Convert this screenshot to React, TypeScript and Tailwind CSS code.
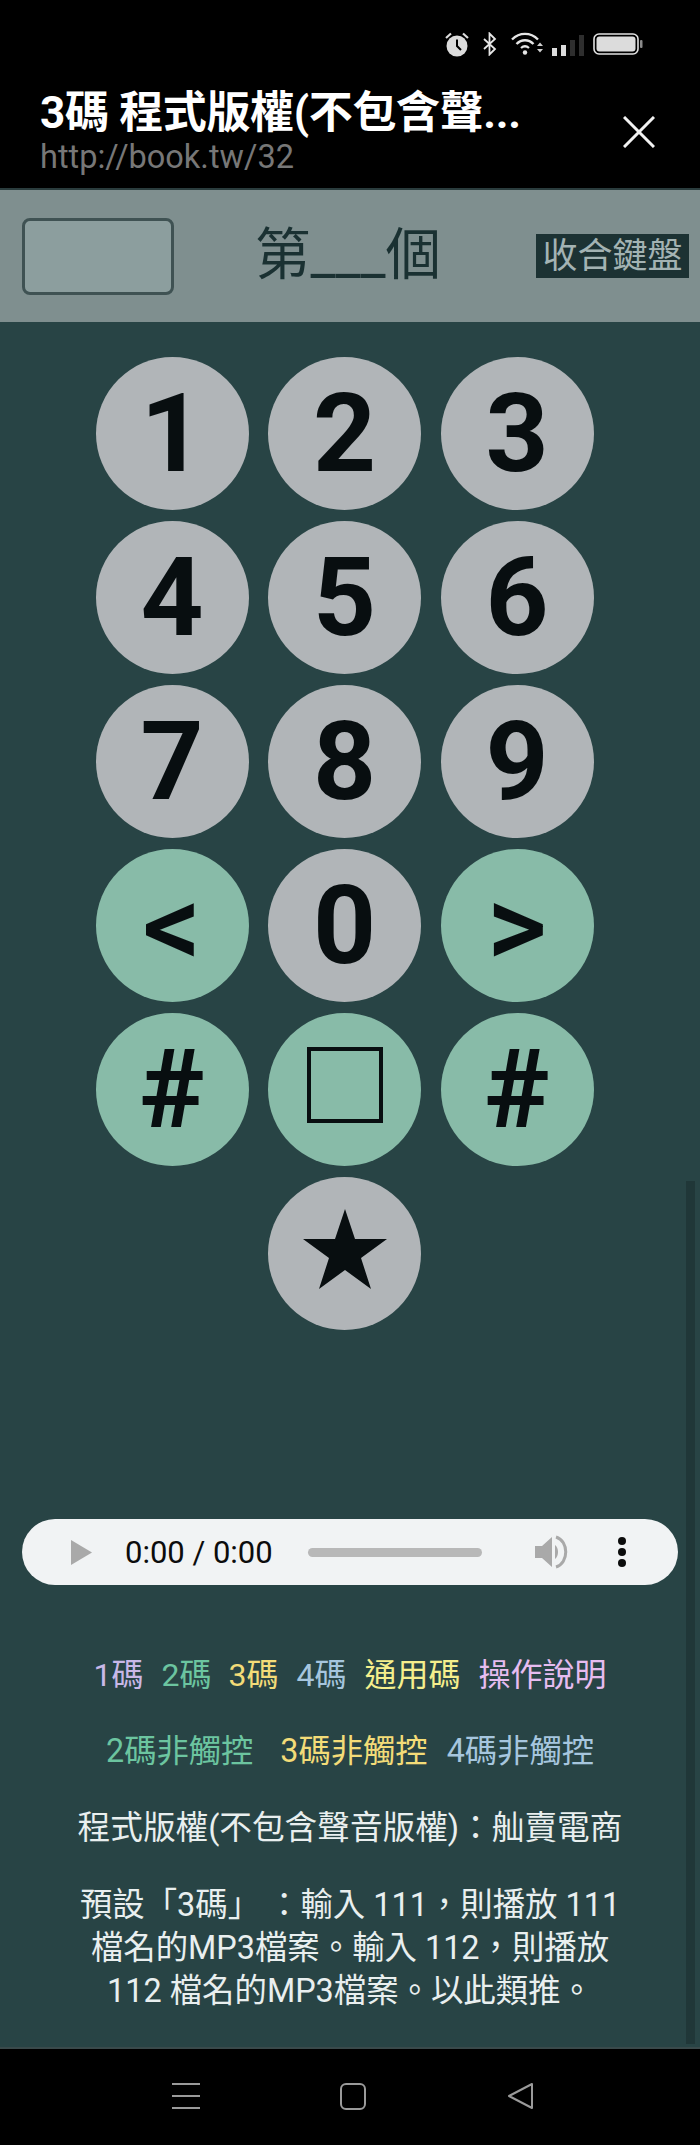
const FONT = "font-['Roboto','Noto_Sans_CJK_TC',sans-serif]";

function StatusIcons() {
  return (
    <div className="flex items-start justify-end pr-[57px] pt-[32px] h-[80px]">
      <svg width="24" height="25" viewBox="0 0 24 25" className="mr-[13px]" fill="none">
        <path d="M1 6 L6 1.5 M23 6 L18 1.5" stroke="#dcdcdc" strokeWidth="2.2" />
        <circle cx="12" cy="14" r="10.5" fill="#dcdcdc" />
        <path d="M12 7.5 V14 L16 18" stroke="#000" strokeWidth="2" fill="none" />
      </svg>
      <svg width="16" height="24" viewBox="0 0 16 24" className="mr-[13px]" fill="none">
        <path d="M2 7 L13 17 L7.5 22.5 V1.5 L13 7 L2 17" stroke="#e6e6e6" strokeWidth="1.8" />
      </svg>
      <svg width="33" height="24" viewBox="0 0 33 24" className="mr-[8px] mt-[-1px]" fill="none">
        <path d="M1 8.5 C8.5 1 19.5 1 27 8.5" stroke="#e6e6e6" strokeWidth="2.4" />
        <path d="M5.5 13 C10.5 8 17.5 8 22.5 13" stroke="#e6e6e6" strokeWidth="2.4" />
        <path d="M10 17 C12.5 14.8 15.5 14.8 18 17" stroke="#e6e6e6" strokeWidth="2.2" />
        <circle cx="14" cy="21.5" r="2.2" fill="#e6e6e6" />
        <path d="M26 15 L29 11.5 L32 15 Z M26 18 L29 21.5 L32 18 Z" fill="#cfcfcf" />
      </svg>
      <div className="flex items-end gap-[4px] h-[24px] mr-[9px]">
        <div className="w-[5px] h-[8px] bg-[#dcdcdc]" />
        <div className="w-[5px] h-[11px] bg-[#dcdcdc]" />
        <div className="w-[5px] h-[16px] bg-[#2e2e2e]" />
        <div className="w-[5px] h-[21px] bg-[#2e2e2e]" />
      </div>
      <svg width="50" height="22" viewBox="0 0 50 22" fill="none" className="mt-[1px]">
        <rect x="1" y="1" width="44" height="20" rx="5" stroke="#e2e2e2" strokeWidth="1.6" />
        <rect x="3.5" y="3.5" width="39" height="15" rx="3" fill="#dcdcdc" />
        <rect x="47" y="7" width="2.5" height="8" rx="1" fill="#8a8a8a" />
      </svg>
    </div>
  );
}

function Key({ label, green, className = "" }: { label: React.ReactNode; green?: boolean; className?: string }) {
  return (
    <button className={`w-[153px] h-[153px] rounded-full flex items-center justify-center text-[110px] leading-none font-bold text-[#080e10] ${green ? "bg-[#88bba8]" : "bg-[#b1b5b8]"} ${className}`}>
      {label}
    </button>
  );
}

export default function App() {
  return (
    <div className={`${FONT} relative w-[700px] h-[2145px] bg-black overflow-hidden flex flex-col [text-spacing-trim:space-all]`}>
      {/* status + title */}
      <header className="h-[190px] bg-black shrink-0 border-b-[2px] border-[#2a3c3d]">
        <StatusIcons />
        <div className="flex items-start justify-between pl-[40px] pr-[45px]">
          <div>
            <div className="text-[44px] leading-[54px] font-bold text-white whitespace-nowrap mt-[6px] tracking-[-0.35px]">3碼 程式版權(不包含聲...</div>
            <div className="text-[32.5px] leading-[32px] text-[#777777] font-['Roboto',sans-serif] mt-[1px]">http://book.tw/32</div>
          </div>
          <svg width="32" height="32" viewBox="0 0 32 32" className="mt-[36px]" fill="none">
            <path d="M1 1 L31 31 M31 1 L1 31" stroke="#f2f2f2" strokeWidth="3" />
          </svg>
        </div>
      </header>

      {/* input bar */}
      <div className="h-[132px] shrink-0 bg-[#7f8f8f] flex items-center pl-[22px] pr-[11px]">
        <div className="w-[152px] h-[77px] rounded-[8px] border-[3px] border-[#3f5253] bg-[#8c9e9e]" />
        <div className="ml-[81px] text-[55.5px] leading-none text-[#1a3132] whitespace-nowrap">第___個</div>
        <button className="ml-auto w-[153px] h-[44px] bg-[#1c3233] text-[35px] leading-none text-[#a3b3b3] whitespace-nowrap flex items-center justify-center">收合鍵盤</button>
      </div>

      {/* main */}
      <main className="relative flex-1 bg-[#284445] flex flex-col">
        <div className="grid grid-cols-[153px_153px_153px] gap-x-[19.5px] gap-y-[11px] pt-[35px] pl-[95.5px]">
          <Key label="1" />
          <Key label="2" />
          <Key label="3" />
          <Key label="4" />
          <Key label="5" />
          <Key label="6" />
          <Key label="7" />
          <Key label="8" />
          <Key label="9" />
          <Key label={<span className="font-medium text-[116px]">&lt;</span>} green />
          <Key label="0" />
          <Key label={<span className="font-medium text-[116px]">&gt;</span>} green />
          <Key label="#" green />
          <Key green label={<span className="block w-[76px] h-[76px] border-[4px] border-[#080e10] mb-[10px]" />} />
          <Key label="#" green />
          <Key className="col-start-2" label={
            <svg width="84" height="80" viewBox="0 0 84 80" className="mb-[10px]"><path d="M42 0 L52 30 L84 30 L58 49 L68 80 L42 61 L16 80 L26 49 L0 30 L32 30 Z" fill="#080e10" /></svg>
          } />
        </div>

        {/* audio player */}
        <div className="mt-[189px] mx-[22px] h-[66px] rounded-full bg-[#f1f3f4] flex items-center">
          <svg width="21" height="25" viewBox="0 0 21 25" className="ml-[49px]"><path d="M0 0 L21 12.5 L0 25 Z" fill="#a9a9a9" /></svg>
          <span className="ml-[33px] text-[31px] leading-none text-[#0c0c0c] whitespace-nowrap">0:00 / 0:00</span>
          <div className="ml-[35px] w-[174px] h-[9px] rounded-full bg-[#b8b8b8]" />
          <svg width="34" height="34" viewBox="0 0 34 34" className="ml-[53px]">
            <path d="M0 11 H7 L17 2 V32 L7 23 H0 Z" fill="#a9a9a9" />
            <path d="M20 10 C24 13 24 21 20 24 Z" fill="#a9a9a9" />
            <path d="M21 2 C34 6 34 28 21 32" stroke="#a9a9a9" strokeWidth="3" fill="none" />
          </svg>
          <div className="ml-[49px] flex flex-col gap-[3px]">
            <div className="w-[8px] h-[8px] rounded-full bg-[#0c0c0c]" />
            <div className="w-[8px] h-[8px] rounded-full bg-[#0c0c0c]" />
            <div className="w-[8px] h-[8px] rounded-full bg-[#0c0c0c]" />
          </div>
        </div>

        {/* links */}
        <div className="mt-[70px] flex justify-center text-[32px] leading-[40px] whitespace-nowrap">
          <a className="text-[#c9b8e8] mr-[18px]">1碼</a>
          <a className="text-[#6cc5a0] mr-[17px]">2碼</a>
          <a className="text-[#f3dc78] mr-[18px]">3碼</a>
          <a className="text-[#a6c6de] mr-[18px]">4碼</a>
          <a className="text-[#f5ef8c] mr-[18px]">通用碼</a>
          <a className="text-[#e6bcf0]">操作說明</a>
        </div>
        <div className="mt-[36px] flex justify-center text-[32.3px] leading-[40px] whitespace-nowrap">
          <a className="text-[#6cc5a0] mr-[27px]">2碼非觸控</a>
          <a className="text-[#f3dc78] mr-[19px]">3碼非觸控</a>
          <a className="text-[#a6c6de]">4碼非觸控</a>
        </div>
        <div className="mt-[37px] text-center text-[32.65px] leading-[40px] text-[#e9efef] whitespace-nowrap">程式版權(不包含聲音版權)：舢賣電商</div>
        <p className="mt-[36px] text-center text-[32.4px] leading-[43px] text-[#e9efef] whitespace-nowrap">
          預設「3碼」 ：輸入 111，則播放 111<br />
          檔名的MP3檔案。輸入 112，則播放<br />
          112 檔名的MP3檔案。以此類推。
        </p>

        {/* scrollbar */}
        <div className="absolute left-[686px] w-[9px] top-[859px] h-[863px] bg-[#203738]" />
      </main>

      {/* nav */}
      <nav className="h-[98px] shrink-0 bg-black border-t-[2px] border-[#3a4a4b] flex items-center pl-[172px] pb-[2px]">
        <div className="flex flex-col gap-[10px] w-[28px]">
          <div className="h-[2px] bg-[#9a9a9a]" />
          <div className="h-[2px] bg-[#9a9a9a]" />
          <div className="h-[2px] bg-[#9a9a9a]" />
        </div>
        <div className="ml-[140px] w-[26px] h-[27px] rounded-[6px] border-[2px] border-[#9a9a9a]" />
        <svg width="27" height="28" viewBox="0 0 27 28" className="ml-[141px]" fill="none">
          <path d="M25 2 V26 L2 14 Z" stroke="#9a9a9a" strokeWidth="2" strokeLinejoin="round" />
        </svg>
      </nav>
    </div>
  );
}
